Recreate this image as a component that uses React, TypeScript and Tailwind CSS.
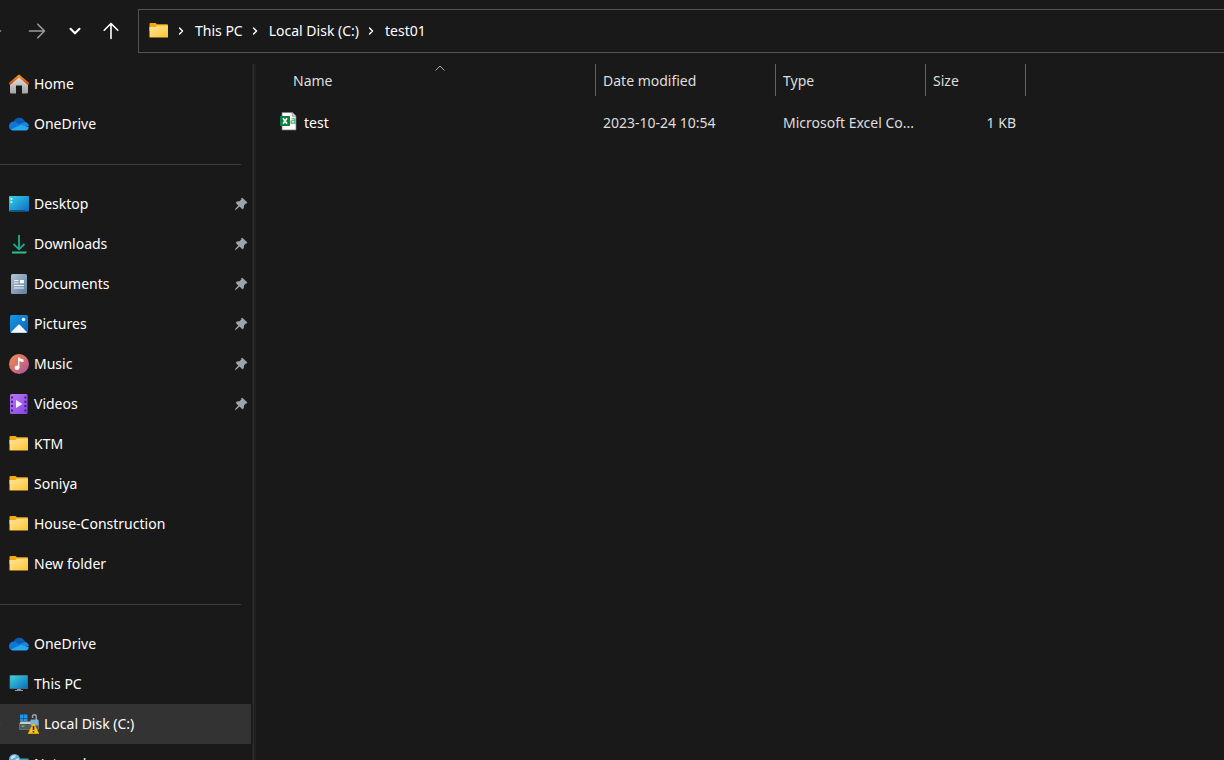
import React from 'react';

type IconProps = { className?: string };

const box = 'h-5 w-5 shrink-0';

function FolderIcon() {
  return (
    <svg viewBox="0 0 20 20" className={box} aria-hidden="true">
      <defs>
        <linearGradient id="folderFront" x1="0" y1="0" x2="1" y2="1">
          <stop offset="0" stopColor="#ffe69a" />
          <stop offset="1" stopColor="#fdc535" />
        </linearGradient>
      </defs>
      <path d="M0.500 3Q0.500 2 1.500 2H6.500L8 3.300H18Q19 3.300 19 4.300V10H0.500Z" fill="#f2a918" />
      <path d="M0.500 6H6.500L8 4.500H19V16H0.500Z" fill="url(#folderFront)" />
      <path d="M0.500 16H19V17H0.500Z" fill="#8f6a22" />
    </svg>
  );
}

function HomeIcon() {
  return (
    <svg viewBox="0 0 20 20" className={box} aria-hidden="true">
      <defs>
        <linearGradient id="homeWall" x1="0" y1="0" x2="0" y2="1">
          <stop offset="0" stopColor="#e4e4e4" />
          <stop offset="1" stopColor="#a3a3a3" />
        </linearGradient>
        <linearGradient id="homeRoof" x1="0" y1="0" x2="0" y2="1">
          <stop offset="0" stopColor="#f7931e" />
          <stop offset="1" stopColor="#d8480c" />
        </linearGradient>
      </defs>
      <path d="M1 9L10 1.500L19 9V18.500Q19 19.500 18 19.500H13V11.500H7V19.500H2Q1 19.500 1 18.500Z" fill="url(#homeWall)" />
      <path d="M1 9.500L10 1.800L19 9.500" fill="none" stroke="url(#homeRoof)" strokeWidth="2.400" strokeLinejoin="round" strokeLinecap="round" />
    </svg>
  );
}

function CloudIcon() {
  return (
    <svg viewBox="0 0 20 20" className={box} aria-hidden="true">
      <path d="M4.500 8C5.500 5 8 3.800 10.500 3.800C13.300 3.900 15.300 5.500 16 8L10 12Z" fill="#0b5cb5" />
      <path d="M0 12C0 9 2.500 7.200 5.500 7.500L14 12.500L3 16.400C1.200 16 0 14.300 0 12Z" fill="#0f78d4" />
      <path d="M10 10.500L15.500 8C18 8 20 9.800 20 12.200L14 13Z" fill="#1687df" />
      <path d="M2 15.500L11.500 10.800L19.800 13.200C19.500 15.400 18 16.600 16 16.600H4.500C3.500 16.600 2.600 16.200 2 15.500Z" fill="#29a8ee" />
    </svg>
  );
}

function DesktopIcon() {
  return (
    <svg viewBox="0 0 20 20" className={box} aria-hidden="true">
      <defs>
        <linearGradient id="deskFill" x1="0" y1="0" x2="1" y2="1">
          <stop offset="0" stopColor="#35d3e4" />
          <stop offset="1" stopColor="#0f69c4" />
        </linearGradient>
      </defs>
      <rect x="0" y="2" width="20" height="15.500" rx="1" fill="url(#deskFill)" />
      <path d="M1 16.500H16" stroke="#12528f" strokeWidth="1" />
      <path d="M1.500 4H3.300V5.800H1.500ZM1.500 7.200H3.300V9H1.500Z" fill="#d9fbff" />
    </svg>
  );
}

function DownloadIcon() {
  return (
    <svg viewBox="0 0 20 20" className={box} fill="none" strokeWidth="1.800" aria-hidden="true">
      <defs>
        <linearGradient id="downFill" gradientUnits="userSpaceOnUse" x1="0" y1="1" x2="0" y2="19">
          <stop offset="0" stopColor="#22b573" />
          <stop offset="0.700" stopColor="#1aa892" />
          <stop offset="1" stopColor="#2bc48a" />
        </linearGradient>
      </defs>
      <path d="M10 1V15M10.010 1V15M4.500 10L10 15.300L15.500 10M3 18.500H17V18.510" stroke="url(#downFill)" />
    </svg>
  );
}

function DocumentIcon() {
  return (
    <svg viewBox="0 0 20 20" className={box} aria-hidden="true">
      <defs>
        <linearGradient id="docFill" x1="0" y1="0" x2="1" y2="1">
          <stop offset="0" stopColor="#b3c4d8" />
          <stop offset="1" stopColor="#5f7f9f" />
        </linearGradient>
      </defs>
      <rect x="2" y="0" width="16" height="20" rx="1.500" fill="url(#docFill)" />
      <path d="M5 6.500H9.500M5 8.800H9.500M5 11.500H15M5 14H15" stroke="#eef4fa" strokeWidth="1" />
      <rect x="11" y="6" width="4" height="3.300" fill="#fff" />
    </svg>
  );
}

function PictureIcon() {
  return (
    <svg viewBox="0 0 20 20" className={box} aria-hidden="true">
      <defs>
        <linearGradient id="picFill" x1="0" y1="0" x2="1" y2="1">
          <stop offset="0" stopColor="#1697e2" />
          <stop offset="1" stopColor="#0966bd" />
        </linearGradient>
      </defs>
      <rect x="1" y="1" width="18" height="18" rx="1.500" fill="url(#picFill)" />
      <circle cx="14.500" cy="5.500" r="1.800" fill="#e6f5ff" />
      <path d="M2 18.200L9 11Q10 10.200 11 11L18 18.200Q17.500 18.800 17 18.800H3Q2.300 18.800 2 18.200Z" fill="#f4faff" />
    </svg>
  );
}

function MusicIcon() {
  return (
    <svg viewBox="0 0 20 20" className={box} aria-hidden="true">
      <defs>
        <linearGradient id="musicFill" x1="0.100" y1="0.100" x2="0.900" y2="0.900">
          <stop offset="0" stopColor="#ee8650" />
          <stop offset="0.600" stopColor="#d06a75" />
          <stop offset="1" stopColor="#a8599f" />
        </linearGradient>
      </defs>
      <circle cx="10" cy="10" r="10" fill="url(#musicFill)" />
      <ellipse cx="8" cy="13.800" rx="2.400" ry="2.200" fill="#fff" />
      <path d="M9 3.500H10.300Q11 5 14.500 5.500V8Q12 7.800 10.400 7V14H9Z" fill="#fff" />
    </svg>
  );
}

function VideoIcon() {
  return (
    <svg viewBox="0 0 20 20" className={box} aria-hidden="true">
      <defs>
        <linearGradient id="videoFill" x1="0" y1="0" x2="1" y2="1">
          <stop offset="0" stopColor="#b878f4" />
          <stop offset="1" stopColor="#8445e0" />
        </linearGradient>
      </defs>
      <rect x="1" y="0" width="17.500" height="20" rx="1.500" fill="url(#videoFill)" />
      <path d="M2 2.500H4V4.500H2ZM2 6.800H4V8.800H2ZM2 11.100H4V13.100H2ZM2 15.400H4V17.400H2ZM15.400 2.500H17.400V4.500H15.400ZM15.400 6.800H17.400V8.800H15.400ZM15.400 11.100H17.400V13.100H15.400ZM15.400 15.400H17.400V17.400H15.400Z" fill="#42207f" />
      <path d="M7 6L13.500 10L7 14Z" fill="#f5edff" />
    </svg>
  );
}

function ComputerIcon() {
  return (
    <svg viewBox="0 0 20 20" className={box} aria-hidden="true">
      <defs>
        <linearGradient id="pcFill" x1="0" y1="0" x2="1" y2="1">
          <stop offset="0" stopColor="#3ad6dc" />
          <stop offset="1" stopColor="#0d6cbd" />
        </linearGradient>
      </defs>
      <rect x="0.500" y="1" width="18.500" height="14" rx="0.800" fill="#486877" />
      <rect x="1.200" y="1.700" width="17" height="12.600" fill="url(#pcFill)" />
      <path d="M8 15H12V16H14V17H6V16H8Z" fill="#8c979e" />
    </svg>
  );
}

function DiskIcon() {
  return (
    <svg viewBox="0 0 20 20" className={box} aria-hidden="true">
      <path d="M1 0.500H4.500V4H1ZM5 0.500H8.500V4H5ZM1 4.500H4.500V7H1ZM5 4.500H8.500V7H5Z" fill="#1b96e8" />
      <path d="M1.500 7.500H19L19.500 10V15.500H0.500V10Z" fill="#c9ccce" />
      <rect x="0.500" y="10" width="19" height="5.500" fill="#55595c" />
      <rect x="2.500" y="11.500" width="3" height="1.500" fill="#35d445" />
      <path d="M13.500 4V2.500Q13.500 0.800 15.300 0.800Q17.200 0.800 17.200 2.500V6" fill="none" stroke="#a4a8ac" strokeWidth="1.400" />
      <rect x="11.500" y="5.500" width="8" height="6" rx="0.600" fill="#78b4d8" />
      <path d="M14.500 8.500L20 19.800H9Z" fill="#ffc20e" stroke="#e8a400" strokeWidth="0.500" />
      <path d="M14.500 12V16M14.500 17V18.400" stroke="#252525" strokeWidth="1.600" />
    </svg>
  );
}

function NetworkIcon() {
  return (
    <svg viewBox="0 0 20 20" className={box} aria-hidden="true">
      <rect x="7" y="4.500" width="12.500" height="10" fill="#34a8c6" />
      <circle cx="5.500" cy="5.500" r="5.500" fill="#6eafd4" />
      <path d="M1.500 3.500Q4 0.500 7 1.500Q6.500 4 4 4.200Q2.500 6 1.500 3.500ZM6.500 5.500L9.500 4L10 7L7.500 9Z" fill="#c8e8f6" />
    </svg>
  );
}

function SpreadsheetIcon() {
  return (
    <svg viewBox="0 0 18 20" className="h-5 w-[18px] shrink-0" aria-hidden="true">
      <path d="M2 0.500H12.500L16 4V18H2Z" fill="#fbfbfb" stroke="#777" strokeWidth="0.700" />
      <path d="M12.300 0.500V4.200H16" fill="#d8d8d8" stroke="#777" strokeWidth="0.700" />
      <text x="9.800" y="12.300" fontSize="11" fontWeight="700" fill="#52bd8c" className="font-['Noto_Sans',sans-serif]">a</text>
      <rect x="0" y="4" width="10" height="10" rx="0.600" fill="#107c41" />
      <path d="M3 6.200L7 11.800M7 6.200L3 11.800" stroke="#fff" strokeWidth="1.600" />
    </svg>
  );
}

function PinIcon() {
  return (
    <svg viewBox="0 0 14 14" className="h-3.5 w-3.5 shrink-0" aria-hidden="true">
      <path d="M8.300 0.800L13.200 5.300L12.800 6.500L11.700 6.500L10 8.600L9.800 11.300L8.300 12.200L5.500 9.600L1.800 13L0.900 12.200L4.300 8.500L1.800 6L2.600 4.500L5.400 4.300L7.300 2.600L7.200 1.300Z" fill="#9aa5ae" />
    </svg>
  );
}

function ArrowIcon({ className = '' }: IconProps) {
  return (
    <svg viewBox="0 0 18 18" className={`h-[18px] w-[18px] ${className}`} fill="none" stroke="currentColor" strokeWidth="1.600" strokeLinecap="round" strokeLinejoin="round" aria-hidden="true">
      <path d="M1.500 9H16.500M9.800 2.200L16.500 9L9.800 15.800" />
    </svg>
  );
}

function ChevronIcon({ className = '' }: IconProps) {
  return (
    <svg viewBox="0 0 12 12" className={className} fill="none" stroke="currentColor" strokeWidth="2.100" strokeLinecap="round" strokeLinejoin="round" aria-hidden="true">
      <path d="M1.500 3.800L6 8.300L10.500 3.800" />
    </svg>
  );
}

type Place = { label: string; icon: () => React.JSX.Element; pinned?: boolean; selected?: boolean };

const groups: Place[][] = [
  [
    { label: 'Home', icon: HomeIcon },
    { label: 'OneDrive', icon: CloudIcon },
  ],
  [
    { label: 'Desktop', icon: DesktopIcon, pinned: true },
    { label: 'Downloads', icon: DownloadIcon, pinned: true },
    { label: 'Documents', icon: DocumentIcon, pinned: true },
    { label: 'Pictures', icon: PictureIcon, pinned: true },
    { label: 'Music', icon: MusicIcon, pinned: true },
    { label: 'Videos', icon: VideoIcon, pinned: true },
    { label: 'KTM', icon: FolderIcon },
    { label: 'Soniya', icon: FolderIcon },
    { label: 'House-Construction', icon: FolderIcon },
    { label: 'New folder', icon: FolderIcon },
  ],
  [
    { label: 'OneDrive', icon: CloudIcon },
    { label: 'This PC', icon: ComputerIcon },
    { label: 'Local Disk (C:)', icon: DiskIcon, selected: true },
    { label: 'Network', icon: NetworkIcon },
  ],
];

const crumbs = ['This PC', 'Local Disk (C:)', 'test01'];

function PlaceRow({ place }: { place: Place }) {
  const Icon = place.icon;
  return (
    <li>
      <a
        href="#"
        aria-current={place.selected ? 'page' : undefined}
        className={
          place.selected
            ? 'mr-px flex h-10 items-center bg-[#333333] pr-1'
            : 'flex h-10 items-center pr-1 pl-[9px]'
        }
      >
        {place.selected && (
          <span className="flex w-[19px] shrink-0 items-center">
            <ChevronIcon className="-ml-1.5 h-2 w-2 -rotate-90 text-[#8a8a8a]" />
          </span>
        )}
        <Icon />
        <span className="grow pl-[5px]">{place.label}</span>
        {place.pinned && <PinIcon />}
      </a>
    </li>
  );
}

export default function App() {
  return (
    <div className="flex h-screen flex-col overflow-hidden bg-[#191919] font-['Noto_Sans','Open_Sans',sans-serif] text-[14px] leading-5 text-white">
      <header className="flex h-16 shrink-0 items-start pt-[9px]">
        <button aria-label="Back" className="-ml-[29px] flex h-11 w-11 shrink-0 items-center justify-center">
          <ArrowIcon className="rotate-180 text-[#9b9b9b]" />
        </button>
        <button aria-label="Forward" className="flex h-11 w-11 shrink-0 items-center justify-center">
          <ArrowIcon className="text-[#9b9b9b]" />
        </button>
        <button aria-label="Recent locations" className="flex h-11 w-8 shrink-0 items-center justify-center">
          <ChevronIcon className="h-3 w-3" />
        </button>
        <button aria-label="Up" className="flex h-11 w-10 shrink-0 items-center justify-center">
          <ArrowIcon className="-rotate-90" />
        </button>
        <nav aria-label="Address" className="ml-[7px] flex h-11 grow items-center border border-r-0 border-[#535353] pl-2.5">
          <FolderIcon />
          <ol className="flex items-center">
            {crumbs.map((crumb) => (
              <li key={crumb} className="flex items-center">
                <span className="flex w-[26px] items-center pl-2">
                  <ChevronIcon className="h-2 w-2 -rotate-90" />
                </span>
                <a href="#">{crumb}</a>
              </li>
            ))}
          </ol>
        </nav>
      </header>

      <div className="flex min-h-0 grow">
        <nav aria-label="Folders" className="w-[252px] shrink-0 overflow-hidden">
          {groups.map((places, index) => (
            <React.Fragment key={index}>
              {index > 0 && (
                <div className="flex h-10 items-center pr-[11px]">
                  <hr className="grow border-[#3a3a3a]" />
                </div>
              )}
              <ul>
                {places.map((place) => (
                  <PlaceRow key={place.label} place={place} />
                ))}
              </ul>
            </React.Fragment>
          ))}
        </nav>
        <div className="flex w-1 shrink-0 bg-[#202020] pl-px">
          <div className="w-px bg-[#2d2d2d]" />
        </div>

        <main className="min-w-0 grow">
          <table className="w-[770px] table-fixed border-separate border-spacing-0 text-[#dedede]">
            <colgroup>
              <col className="w-[340px]" />
              <col className="w-[180px]" />
              <col className="w-[150px]" />
              <col className="w-[100px]" />
            </colgroup>
            <thead>
              <tr className="h-8 text-left">
                <th className="relative border-r border-[#636363] p-0 pt-0.5 pl-[37px] font-normal">
                  Name
                  <svg viewBox="0 0 10 6" className="absolute top-px left-[179px] h-1.5 w-2.5" fill="none" stroke="#a8a8a8" aria-hidden="true">
                    <path d="M0.500 5.500L5 1L9.500 5.500" />
                  </svg>
                </th>
                <th className="border-r border-[#636363] p-0 pt-0.5 pl-[7px] font-normal">Date modified</th>
                <th className="border-r border-[#636363] p-0 pt-0.5 pl-[7px] font-normal">Type</th>
                <th className="border-r border-[#636363] p-0 pt-0.5 pl-[7px] font-normal">Size</th>
              </tr>
            </thead>
            <tbody>
              <tr className="h-[52px]">
                <td className="p-0 pl-6 text-white">
                  <a href="#" className="flex items-center gap-1.5">
                    <SpreadsheetIcon />
                    <span className="pt-0.5">test</span>
                  </a>
                </td>
                <td className="p-0 pt-0.5 pl-[7px]">2023-10-24 10:54</td>
                <td className="p-0 pt-0.5 pl-[7px]">Microsoft Excel Co...</td>
                <td className="p-0 pt-0.5 pr-2.5 text-right">1 KB</td>
              </tr>
            </tbody>
          </table>
        </main>
      </div>
    </div>
  );
}
